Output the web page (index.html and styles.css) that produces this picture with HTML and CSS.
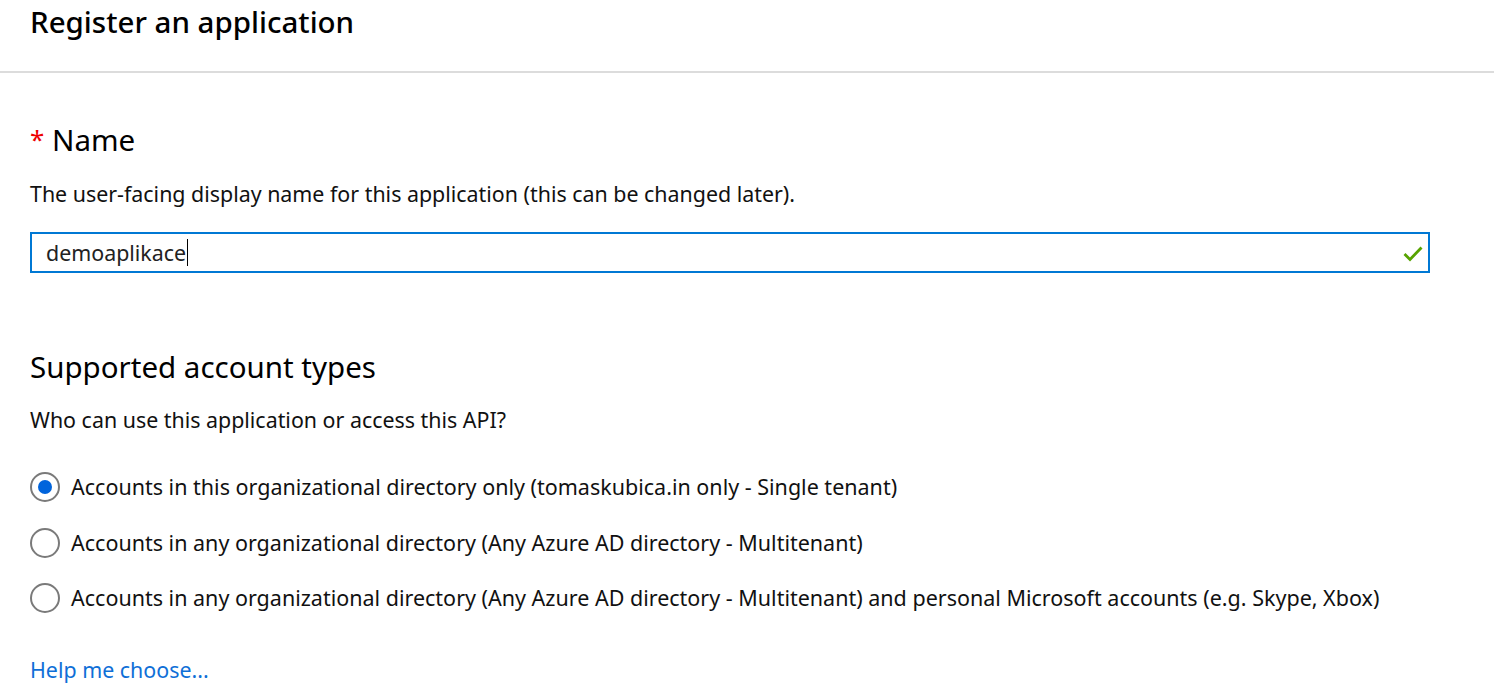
FILE: index.html
```html
<!DOCTYPE html>
<html>
<head>
<meta charset="utf-8">
<link rel="stylesheet" href="styles.css">
</head>
<body>
<header class="top">
  <h1 class="title">Register an application</h1>
</header>
<main class="content">
  <section class="section">
    <h2 class="heading"><span class="req">*</span> Name</h2>
    <p class="desc">The user-facing display name for this application (this can be changed later).</p>
    <div class="input">
      <span class="value">demoaplikace</span><span class="caret"></span>
      <svg class="check" width="20" height="16" viewBox="0 0 20 16"><path d="M1.5 8 L7 13.5 L18.5 1.5" fill="none" stroke="#57a300" stroke-width="2.8"/></svg>
    </div>
  </section>
  <section class="section second">
    <h2 class="heading">Supported account types</h2>
    <p class="desc">Who can use this application or access this API?</p>
    <div class="radios">
      <label class="radio"><span class="circle checked"></span><span>Accounts in this organizational directory only (tomaskubica.in only - Single tenant)</span></label>
      <label class="radio"><span class="circle"></span><span>Accounts in any organizational directory (Any Azure AD directory - Multitenant)</span></label>
      <label class="radio"><span class="circle"></span><span>Accounts in any organizational directory (Any Azure AD directory - Multitenant) and personal Microsoft accounts (e.g. Skype, Xbox)</span></label>
    </div>
    <a class="help" href="#">Help me choose...</a>
  </section>
</main>
</body>
</html>
```
FILE: styles.css
```css
html, body {
  margin: 0;
  padding: 0;
  background: #fff;
  font-family: "Noto Sans", "Open Sans", sans-serif;
  color: #000;
  overflow: hidden;
}
.top {
  height: 73px;
  border-bottom: 2px solid #dcdcdc;
  padding-left: 30px;
  box-sizing: border-box;
}
.title {
  margin: 0;
  font-size: 29.5px;
  font-weight: 500;
  line-height: 44px;
}
.content {
  padding-left: 30px;
  width: 1400px;
}
.section {
  padding-top: 47px;
}
.section.second {
  padding-top: 74px;
}
.heading {
  margin: 0;
  font-size: 29.5px;
  font-weight: 400;
  line-height: 40px;
}
.req {
  color: #e00;
  font-size: 26px;
  position: relative;
  top: -2px;
}
.desc {
  margin: 19px 0 0;
  font-size: 21.4px;
  line-height: 28px;
  color: #111;
}
.input {
  margin-top: 24px;
  height: 41px;
  box-sizing: border-box;
  border: 2px solid #0078d4;
  display: flex;
  align-items: center;
  padding-left: 14px;
  padding-right: 5px;
  font-size: 21.4px;
  color: #222;
}
.caret {
  display: inline-block;
  width: 1px;
  height: 27px;
  background: #000;
  margin-left: 1px;
}
.check {
  margin-left: auto;
  margin-top: 2px;
}
.radios {
  margin-top: 37px;
  display: flex;
  flex-direction: column;
  gap: 23.5px;
}
.radio {
  display: flex;
  align-items: center;
  gap: 11px;
  font-size: 21.5px;
  line-height: 32px;
  color: #111;
}
.circle {
  width: 30px;
  height: 30px;
  border: 2px solid #7a7a7a;
  border-radius: 50%;
  box-sizing: border-box;
  display: flex;
  align-items: center;
  justify-content: center;
  flex: none;
}
.circle.checked::after {
  content: "";
  width: 14px;
  height: 14px;
  border-radius: 50%;
  background: #0064dc;
}
.help {
  display: block;
  width: max-content;
  margin-top: 42px;
  font-size: 21.4px;
  line-height: 28px;
  color: #0f6fd7;
  text-decoration: none;
}
```
